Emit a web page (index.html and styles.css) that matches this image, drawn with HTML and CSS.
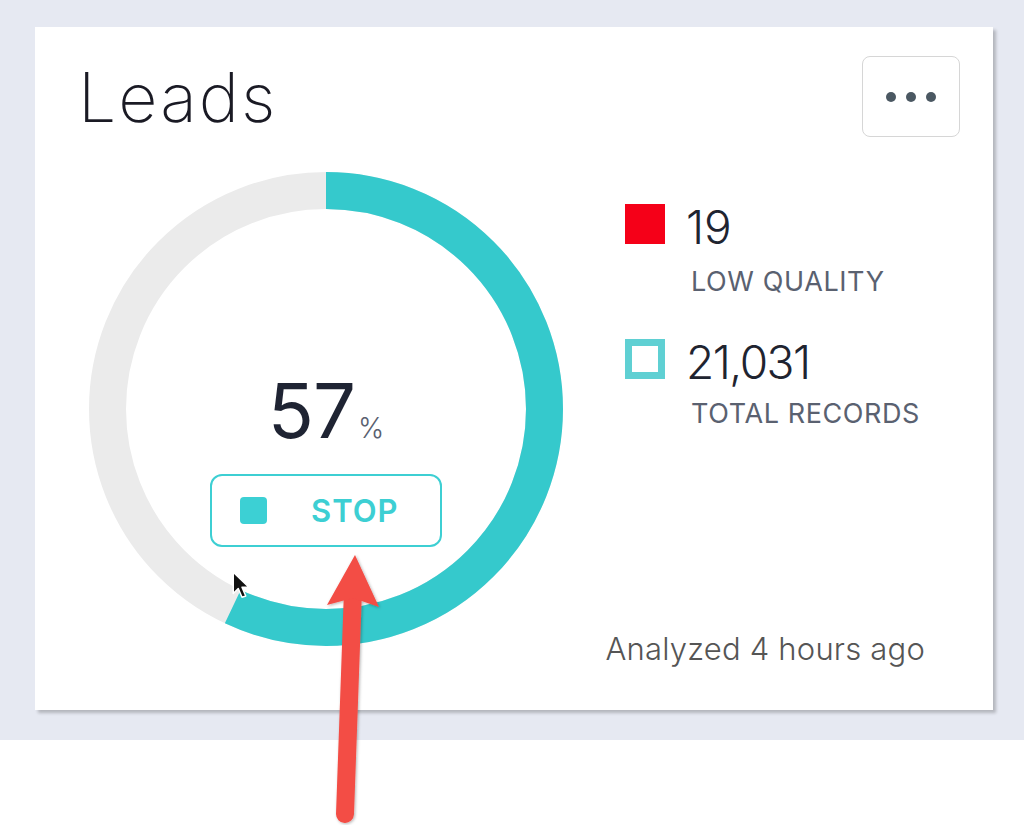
FILE: index.html
```html
<!DOCTYPE html>
<html lang="en">
<head>
<meta charset="utf-8">
<title>Leads</title>
<link rel="stylesheet" href="styles.css">
</head>
<body>
<div class="page">
  <div class="stage">
    <section class="card">
      <header class="card-head">
        <h1 class="title">Leads</h1>
        <button class="menu" aria-label="More options"><span class="dot"></span><span class="dot"></span><span class="dot"></span></button>
      </header>
      <div class="card-body">
        <div class="donut">
          <svg class="donut-svg" width="474" height="474" viewBox="0 0 474 474">
            <circle cx="237" cy="237" r="218.5" fill="none" stroke="#ebebeb" stroke-width="37"/>
            <circle cx="237" cy="237" r="218.5" fill="none" stroke="#35c9cc" stroke-width="37" stroke-dasharray="782.5 1372.9" transform="rotate(-90 237 237)"/>
          </svg>
          <div class="donut-center">
            <div class="pct"><span class="pct-num">57</span><span class="pct-sign">%</span></div>
            <button class="stop"><span class="stop-icon"></span><span class="stop-label">STOP</span></button>
          </div>
        </div>
        <div class="side">
          <ul class="legend">
            <li class="legend-item">
              <span class="swatch swatch-low"></span>
              <div class="legend-text">
                <span class="legend-num">19</span>
                <span class="legend-label">LOW QUALITY</span>
              </div>
            </li>
            <li class="legend-item">
              <span class="swatch swatch-total"></span>
              <div class="legend-text">
                <span class="legend-num">21,031</span>
                <span class="legend-label">TOTAL RECORDS</span>
              </div>
            </li>
          </ul>
          <p class="analyzed">Analyzed 4 hours ago</p>
        </div>
      </div>
    </section>
  </div>
  <svg class="cursor" width="20" height="30" viewBox="0 0 16 24">
    <path d="M1 1 L1 18 L5 14 L8 21 L11 20 L8 13 L13.5 13 Z" fill="#111" stroke="#fff" stroke-width="1.2" stroke-linejoin="round"/>
  </svg>
  <svg class="arrow" width="80" height="290" viewBox="0 0 80 290">
    <defs>
      <filter id="sh" x="-50%" y="-20%" width="200%" height="140%">
        <feDropShadow dx="1" dy="1" stdDeviation="1.5" flood-color="#000" flood-opacity="0.3"/>
      </filter>
    </defs>
    <g filter="url(#sh)" fill="#f34d45">
      <line x1="25" y1="274" x2="33" y2="50" stroke="#f34d45" stroke-width="18" stroke-linecap="round"/>
      <path d="M35 15 L59 67 L33 58 L7 65 Z"/>
    </g>
  </svg>
</div>
</body>
</html>
```
FILE: styles.css
```css
* { box-sizing: border-box; }
html, body { margin: 0; padding: 0; background: #ffffff; }
body { font-family: "Inter", "DejaVu Sans", sans-serif; color: #1f2430; }

.page { position: relative; width: 1024px; height: 825px; overflow: hidden; }

.stage {
  height: 740px;
  background: #e6e9f2;
  padding: 27px 0 0 35px;
}

.card {
  width: 958px;
  height: 683px;
  background: #ffffff;
  box-shadow: 3px 3px 3px rgba(0, 0, 0, 0.22);
  display: flex;
  flex-direction: column;
}

.card-head {
  display: flex;
  justify-content: space-between;
  align-items: flex-start;
  padding: 29px 33px 0 43px;
  height: 145px;
}

.title {
  margin: 0;
  font-size: 68px;
  font-weight: 200;
  line-height: 1;
  margin-top: 7px;
  color: #1a1a24;
  letter-spacing: 2px;
}

.menu {
  width: 98px;
  height: 81px;
  border: 1px solid #d6d6d6;
  border-radius: 8px;
  background: #fff;
  display: flex;
  align-items: center;
  justify-content: center;
  gap: 10px;
  padding: 0;
}
.dot { width: 10px; height: 10px; border-radius: 50%; background: #4b5862; }

.card-body {
  display: flex;
  padding-left: 54px;
  flex: 1;
}

.donut {
  display: grid;
  width: 474px;
  height: 474px;
}
.donut-svg, .donut-center { grid-area: 1 / 1; }
.donut-center {
  display: flex;
  flex-direction: column;
  align-items: center;
  padding-top: 200px;
}

.pct { display: flex; align-items: baseline; line-height: 1; }
.pct-num { font-size: 76px; font-weight: 400; color: #1f2433; letter-spacing: -1px; }
.pct-sign { font-size: 28px; font-weight: 300; color: #5a6170; margin-left: 3px; }

.stop {
  margin-top: 26px;
  width: 232px;
  height: 73px;
  border: 2px solid #3dcfd3;
  border-radius: 12px;
  background: #fff;
  display: flex;
  align-items: center;
  padding: 0 0 0 28px;
  font-family: inherit;
}
.stop-icon { width: 27px; height: 27px; border-radius: 4px; background: #3cd0d4; }
.stop-label {
  margin-left: 44px;
  font-size: 31px;
  font-weight: 600;
  color: #3dcfd3;
  letter-spacing: 1px;
}

.side {
  margin-left: 62px;
  width: 300px;
  display: flex;
  flex-direction: column;
}

.legend { list-style: none; margin: 0; padding: 0; padding-top: 32px; }
.legend-item { display: flex; align-items: flex-start; margin-bottom: 44px; }
.swatch { width: 40px; height: 40px; flex: none; }
.swatch-low { background: #f50018; }
.swatch-total { border: 7px solid #5fd0d3; }
.legend-text { display: flex; flex-direction: column; margin-left: 21px; }
.legend-num { font-size: 46px; font-weight: 300; line-height: 1; color: #1f2430; }
.legend-item + .legend-item .legend-num { letter-spacing: -1.5px; }
.legend-label { font-size: 27px; font-weight: 400; color: #5a6170; margin-top: 18px; margin-left: 5px; line-height: 1; letter-spacing: 0.6px; }
.legend-item + .legend-item .legend-label { margin-top: 15px; }

.analyzed {
  margin: auto 0 46px -40px;
  text-align: right;
  font-size: 31px;
  font-weight: 300;
  line-height: 1;
  color: #555555;
  white-space: nowrap;
  letter-spacing: 0.2px;
}

.cursor { position: absolute; left: 232px; top: 571px; }
.arrow { position: absolute; left: 320px; top: 540px; }
```
